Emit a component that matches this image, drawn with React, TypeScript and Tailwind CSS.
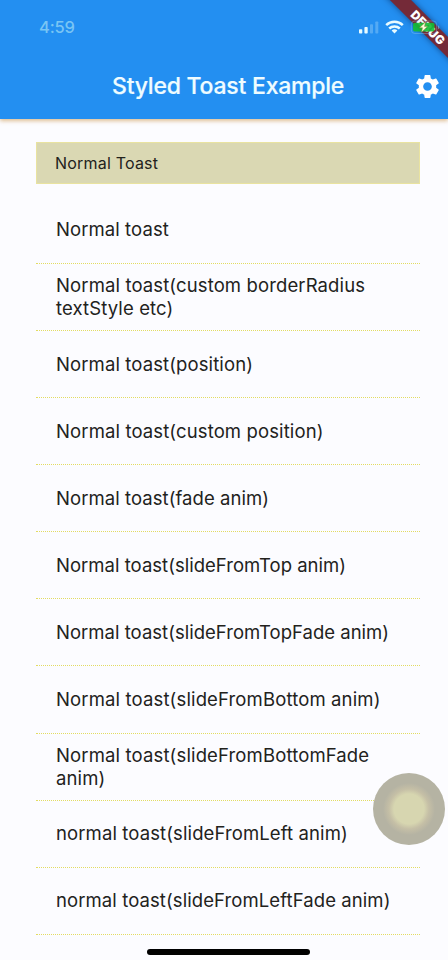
import React from "react";
import { MdSettings } from "react-icons/md";

const items: { lines: string[]; tracking: string }[] = [
  { lines: ["Normal toast"], tracking: "tracking-[0.08px]" },
  { lines: ["Normal toast(custom borderRadius", "textStyle etc)"], tracking: "tracking-[0.12px]" },
  { lines: ["Normal toast(position)"], tracking: "tracking-[0.11px]" },
  { lines: ["Normal toast(custom position)"], tracking: "tracking-[0.12px]" },
  { lines: ["Normal toast(fade anim)"], tracking: "tracking-[0.06px]" },
  { lines: ["Normal toast(slideFromTop anim)"], tracking: "tracking-[0.02px]" },
  { lines: ["Normal toast(slideFromTopFade anim)"], tracking: "tracking-[0.02px]" },
  { lines: ["Normal toast(slideFromBottom anim)"], tracking: "tracking-[0.14px]" },
  { lines: ["Normal toast(slideFromBottomFade", "anim)"], tracking: "tracking-[0.14px]" },
  { lines: ["normal toast(slideFromLeft anim)"], tracking: "tracking-[0.11px]" },
  { lines: ["normal toast(slideFromLeftFade anim)"], tracking: "tracking-[0.09px]" },
];

function StatusIcons() {
  return (
    <svg width="84" height="24" viewBox="356 15 84 24" className="relative z-10 block">
      <g fill="#e8fbff">
        <rect x="359" y="29.3" width="3.3" height="4.2" rx="0.8" />
        <rect x="364.4" y="27" width="3.3" height="6.5" rx="0.8" />
        <rect x="370" y="24.3" width="3" height="9.2" rx="0.8" opacity="0.25" />
        <rect x="375.3" y="21.5" width="3" height="12" rx="0.8" opacity="0.25" />
        <path d="M394.5 33.6l-2.9-3a4.3 4.3 0 0 1 5.8 0z" />
      </g>
      <g fill="none" stroke="#e8fbff" strokeWidth="2.5">
        <path d="M389.2 28.5a7.7 7.7 0 0 1 10.6 0" />
        <path d="M386.2 25.2a12 12 0 0 1 16.6 0" />
      </g>
      <rect x="411.3" y="21" width="25.4" height="12.5" rx="3.5" fill="none" stroke="#9fd2f2" strokeOpacity="0.35" />
      <rect x="413" y="22.8" width="21.5" height="8.8" rx="1.8" fill="#13bd35" fillOpacity="0.9" />
      <path d="M438 25.2v4c1.8-.6 1.8-3.4 0-4z" fill="#9fd2f2" opacity="0.5" />
      <path d="M425.5 22l-6 5.8h3l-1 4.5 6-5.9h-3z" fill="#fffbdc" stroke="#8a8a3c" strokeWidth="0.5" />
    </svg>
  );
}

export default function App() {
  return (
    <div className="relative flex h-[960px] w-[448px] flex-col overflow-hidden bg-[#fcfcff] font-[Inter,'Liberation_Sans',sans-serif] text-[#22221c]">
      <header className="relative z-10 h-[119px] shrink-0 bg-[#238ff1] shadow-[0_2px_4px_rgba(215,175,120,0.8)]">
        <div className="flex h-[53px] items-start justify-between pt-[15px] pr-[8px] pl-[39px]">
          <span className="mt-[1px] text-[16.5px] leading-[23px] font-medium tracking-[-0.2px] text-[#79c5f4]">4:59</span>
          <StatusIcons />
        </div>
        <div className="flex h-[66px] items-center pl-[112px]">
          <h1 className="w-[303px] text-[23px] leading-[30px] font-medium tracking-[-0.22px] whitespace-nowrap text-[#effcff] [-webkit-text-stroke:0.2px_#effcff]">
            Styled Toast Example
          </h1>
          <MdSettings className="size-[29px] shrink-0 -translate-x-[2px] text-white" />
        </div>
        <div className="absolute top-[20px] left-[368px] flex h-[15px] w-[120px] rotate-45 items-center justify-center bg-[#742a38] text-[12px] leading-none font-black tracking-[0.2px] text-white shadow-[0_0_6px_rgba(0,20,60,0.55)]">
          DEBUG
        </div>
      </header>

      <main className="flex flex-col px-[36px] pt-[23px]">
        <div className="flex h-[42px] w-[384px] items-center border border-[#e9e3a0] bg-[#dad8b3] pl-[18px] text-[16px] leading-[20px] tracking-[0.2px]">
          Normal Toast
        </div>
        <div className="mt-[12.8px] w-[384px]">
          {items.map(({ lines, tracking }) => (
            <div
              key={lines.join(" ")}
              className={`flex h-[67.1px] flex-col justify-center border-b border-dotted border-[#e3dc62] pl-[20px] text-[18.5px] leading-[22.8px] whitespace-nowrap ${tracking}`}
            >
              {lines.map((line) => (
                <span key={line} className="translate-y-[0.4px]">{line}</span>
              ))}
            </div>
          ))}
        </div>
      </main>

      <div className="absolute top-[773px] left-[373px] size-[72px] rounded-full bg-[radial-gradient(circle,#d7d6b0_0_15px,#c5bfa6_20px,#b5b3a3_26px)]" />
      <div className="absolute top-[949px] left-[147px] h-[6px] w-[163px] rounded-full bg-black" />
    </div>
  );
}
